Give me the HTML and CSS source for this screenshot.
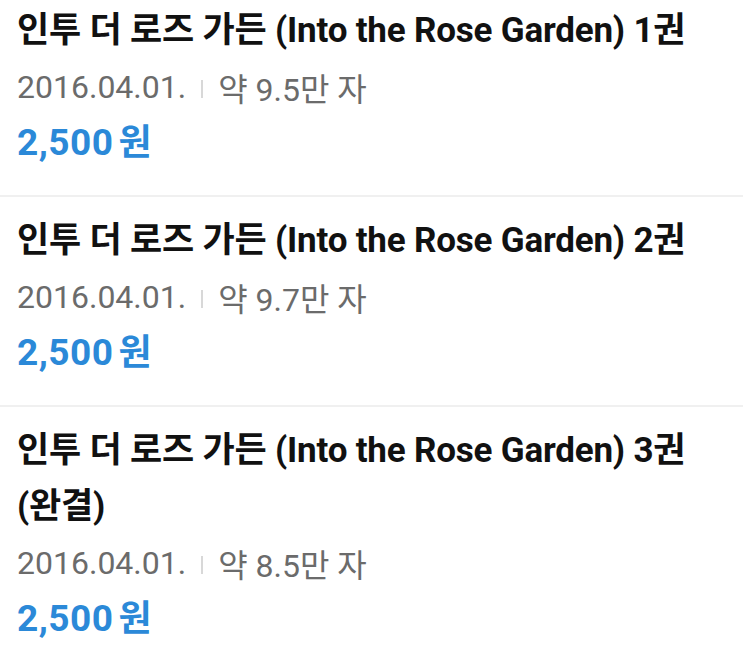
FILE: index.html
```html
<!DOCTYPE html>
<html lang="ko">
  <head>
    <meta charset="UTF-8" />
    <meta name="viewport" content="width=device-width, initial-scale=1.0" />
    <title>인투 더 로즈 가든</title>
    <link rel="stylesheet" href="styles.css">
  </head>
  <body>
    <ul class="volume-list">
      <li class="volume">
        <div class="volume-title">인투 더 로즈 가든 (Into the Rose Garden) 1권</div>
        <div class="volume-meta">
          <span class="date">2016.04.01.</span>
          <span class="divider"></span>
          <span class="length">약 9.5만 자</span>
        </div>
        <div class="volume-price">2,500<span class="won">원</span></div>
      </li>
      <li class="volume">
        <div class="volume-title">인투 더 로즈 가든 (Into the Rose Garden) 2권</div>
        <div class="volume-meta">
          <span class="date">2016.04.01.</span>
          <span class="divider"></span>
          <span class="length">약 9.7만 자</span>
        </div>
        <div class="volume-price">2,500<span class="won">원</span></div>
      </li>
      <li class="volume">
        <div class="volume-title">인투 더 로즈 가든 (Into the Rose Garden) 3권 (완결)</div>
        <div class="volume-meta">
          <span class="date">2016.04.01.</span>
          <span class="divider"></span>
          <span class="length">약 8.5만 자</span>
        </div>
        <div class="volume-price">2,500<span class="won">원</span></div>
      </li>
    </ul>
  </body>
</html>
```

FILE: styles.css
```css
body {
  margin: 0;
  background-color: #fff;
  font-family: "Roboto", "Noto Sans CJK KR", sans-serif;
  color: #111;
}
.volume-list {
  list-style: none;
  margin: 0;
  padding: 0;
}
.volume {
  padding: 16px 17px 24px;
  border-bottom: 2px solid #f0f0f0;
}
.volume:first-child {
  padding-top: 3px;
}
.volume-title {
  font-size: 35px;
  font-weight: 700;
  line-height: 56px;
  letter-spacing: -0.2px;
}
.volume-meta {
  display: flex;
  align-items: center;
  height: 56px;
  font-size: 32px;
  color: #6b6b6b;
}
.divider {
  width: 2px;
  height: 18px;
  background-color: #d8d8d8;
  margin: 3px 15px 0 15px;
}
.volume-price {
  font-size: 37px;
  font-weight: 700;
  line-height: 56px;
  color: #2b89d8;
  letter-spacing: 0.5px;
}
.won {
  font-size: 36px;
  margin-left: 5px;
  letter-spacing: 0;
}
```
